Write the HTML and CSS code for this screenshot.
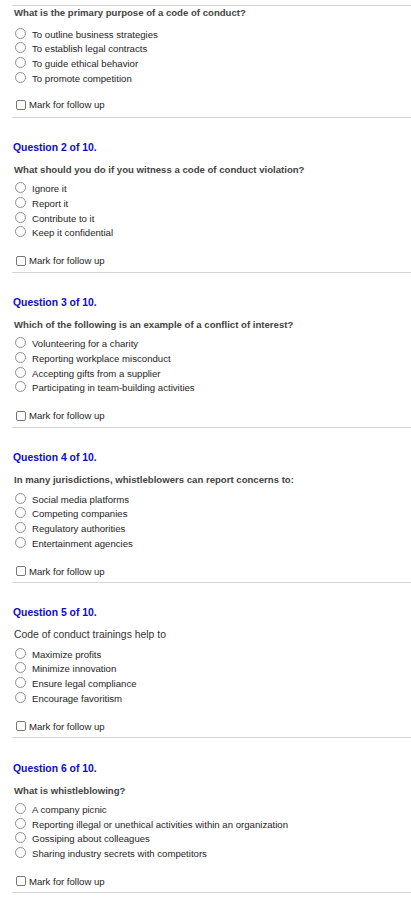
FILE: index.html
```html
<!DOCTYPE html>
<html>
<head>
<meta charset="utf-8">
<link rel="stylesheet" href="styles.css">
</head>
<body>
<div class="quiz">
  <section class="q first">
    <p class="qtext">What is the primary purpose of a code of conduct?</p>
    <ul class="opts">
      <li><span class="radio"></span>To outline business strategies</li>
      <li><span class="radio"></span>To establish legal contracts</li>
      <li><span class="radio"></span>To guide ethical behavior</li>
      <li><span class="radio"></span>To promote competition</li>
    </ul>
    <label class="mark"><span class="check"></span>Mark for follow up</label>
  </section>

  <section class="q">
    <h2 class="qhead">Question 2 of 10.</h2>
    <p class="qtext">What should you do if you witness a code of conduct violation?</p>
    <ul class="opts">
      <li><span class="radio"></span>Ignore it</li>
      <li><span class="radio"></span>Report it</li>
      <li><span class="radio"></span>Contribute to it</li>
      <li><span class="radio"></span>Keep it confidential</li>
    </ul>
    <label class="mark"><span class="check"></span>Mark for follow up</label>
  </section>

  <section class="q">
    <h2 class="qhead">Question 3 of 10.</h2>
    <p class="qtext">Which of the following is an example of a conflict of interest?</p>
    <ul class="opts">
      <li><span class="radio"></span>Volunteering for a charity</li>
      <li><span class="radio"></span>Reporting workplace misconduct</li>
      <li><span class="radio"></span>Accepting gifts from a supplier</li>
      <li><span class="radio"></span>Participating in team-building activities</li>
    </ul>
    <label class="mark"><span class="check"></span>Mark for follow up</label>
  </section>

  <section class="q">
    <h2 class="qhead">Question 4 of 10.</h2>
    <p class="qtext">In many jurisdictions, whistleblowers can report concerns to:</p>
    <ul class="opts">
      <li><span class="radio"></span>Social media platforms</li>
      <li><span class="radio"></span>Competing companies</li>
      <li><span class="radio"></span>Regulatory authorities</li>
      <li><span class="radio"></span>Entertainment agencies</li>
    </ul>
    <label class="mark"><span class="check"></span>Mark for follow up</label>
  </section>

  <section class="q">
    <h2 class="qhead">Question 5 of 10.</h2>
    <p class="qtext plain">Code of conduct trainings help to</p>
    <ul class="opts">
      <li><span class="radio"></span>Maximize profits</li>
      <li><span class="radio"></span>Minimize innovation</li>
      <li><span class="radio"></span>Ensure legal compliance</li>
      <li><span class="radio"></span>Encourage favoritism</li>
    </ul>
    <label class="mark"><span class="check"></span>Mark for follow up</label>
  </section>

  <section class="q">
    <h2 class="qhead">Question 6 of 10.</h2>
    <p class="qtext">What is whistleblowing?</p>
    <ul class="opts">
      <li><span class="radio"></span>A company picnic</li>
      <li><span class="radio"></span>Reporting illegal or unethical activities within an organization</li>
      <li><span class="radio"></span>Gossiping about colleagues</li>
      <li><span class="radio"></span>Sharing industry secrets with competitors</li>
    </ul>
    <label class="mark"><span class="check"></span>Mark for follow up</label>
  </section>
</div>
</body>
</html>
```

FILE: styles.css
```css
html, body {
  margin: 0;
  padding: 0;
  background: #fff;
}

body {
  font-family: "Liberation Sans", Arial, sans-serif;
  color: #222;
}

.quiz {
  margin-left: 12px;
}

.q {
  display: flex;
  flex-direction: column;
  padding-top: 24.25px;
  border-bottom: 1px solid #d5d5d5;
}

.q.first {
  border-top: 1px solid #d5d5d5;
  margin-top: 5px;
  padding-top: 0.5px;
}

.qhead {
  margin: 0 0 10px 1px;
  font-size: 10.4px;
  line-height: 12px;
  font-weight: bold;
  color: #0c0cc4;
}

.qtext {
  margin: 0 0 5.6px 2px;
  font-size: 9.6px;
  line-height: 12px;
  font-weight: bold;
  color: #444;
}

.first .qtext {
  margin-bottom: 8.4px;
}

.qtext.plain {
  font-size: 10.4px;
  font-weight: normal;
  color: #333;
}

.opts {
  list-style: none;
  margin: 0;
  padding: 0;
}

.opts li {
  display: flex;
  align-items: center;
  height: 14.7px;
  font-size: 9.6px;
  color: #1e1e1e;
  padding-left: 3px;
}

.radio {
  box-sizing: border-box;
  width: 11px;
  height: 11px;
  border: 1px solid #8f8f8f;
  border-radius: 50%;
  background: #fff;
  margin-right: 6px;
  flex: none;
  position: relative;
  top: -1px;
}

.mark {
  display: flex;
  align-items: center;
  height: 12px;
  margin-top: 14.6px;
  margin-bottom: 5px;
  padding-left: 4px;
  font-size: 9.6px;
  color: #1e1e1e;
}

.first .mark {
  margin-top: 13.3px;
  margin-bottom: 5.6px;
}

.check {
  box-sizing: border-box;
  width: 10px;
  height: 10px;
  border: 1px solid #777;
  border-radius: 2px;
  background: #fff;
  margin-right: 3px;
  flex: none;
}
```
